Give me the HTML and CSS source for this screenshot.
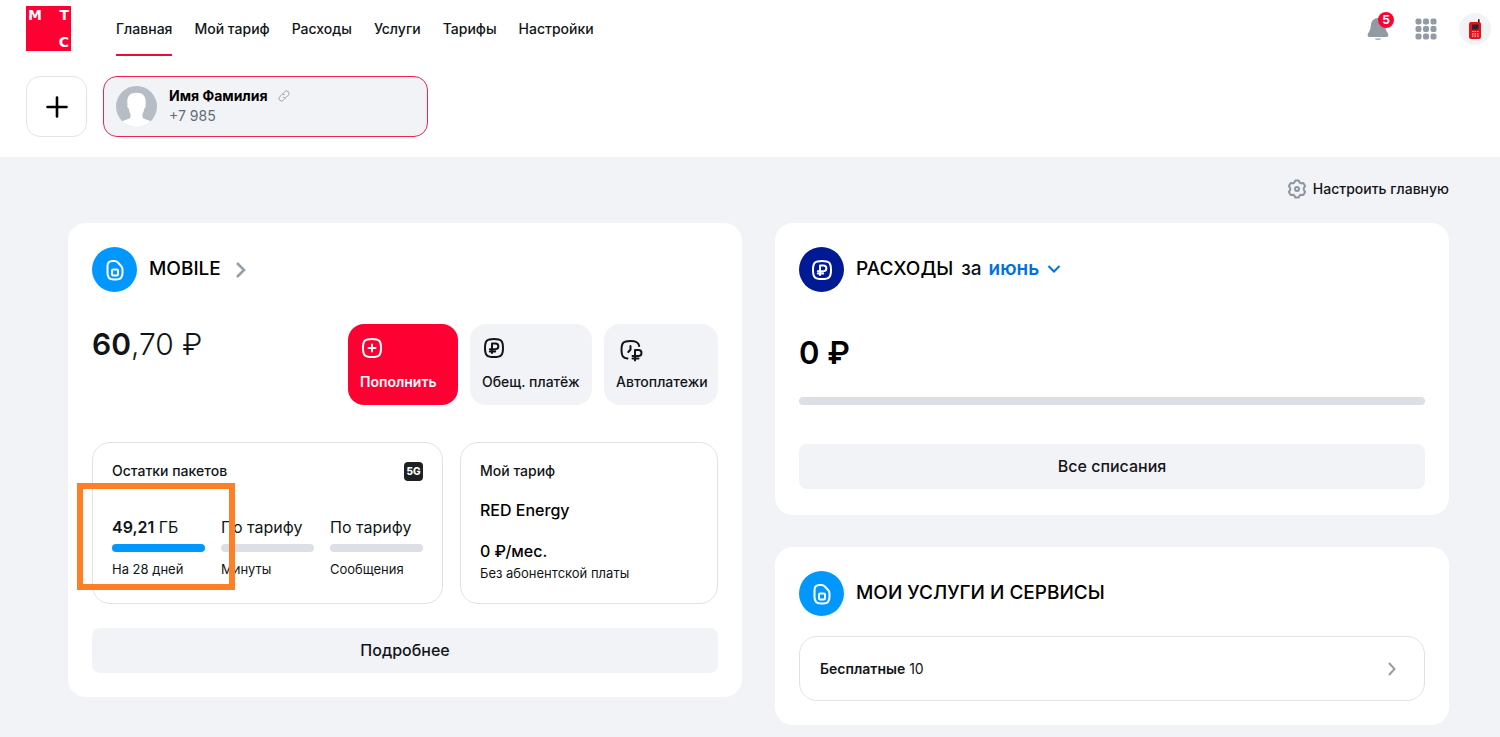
FILE: index.html
```html
<!DOCTYPE html>
<html lang="ru">
<head>
<meta charset="utf-8">
<title>МТС — Главная</title>
<link rel="stylesheet" href="styles.css">
</head>
<body>
<svg class="sprite" aria-hidden="true">
  <symbol id="sim" viewBox="0 0 24 24"><path d="M4.500 8.200C4.500 4.500 6.200 3 9.500 3h2c1.300 0 2.200.4 3.100 1.300l3.500 3.700C19.200 9.100 19.500 10 19.500 11.500v3.500c0 4.500-1.700 6.500-6.200 6.500h-2.600C6.200 21.500 4.500 19.500 4.500 15Z"/><rect x="9" y="11.500" width="6" height="6" rx="1.200"/></symbol>
  <symbol id="ruble" viewBox="0 0 24 24"><path d="M12 3c7.200 0 9 1.800 9 9s-1.800 9-9 9-9-1.800-9-9 1.800-9 9-9Z"/><path d="M10 17V7.500h3.500a2.800 2.800 0 0 1 0 5.700H7.800M7.800 15.500h5.400"/></symbol>
</svg>

<header class="header">
  <div class="topbar">
    <a class="logo" href="#" aria-label="МТС"><span>М</span><span>Т</span><span class="logo-last">С</span></a>
    <nav class="nav">
      <a class="nav-link active" href="#">Главная</a>
      <a class="nav-link" href="#">Мой тариф</a>
      <a class="nav-link" href="#">Расходы</a>
      <a class="nav-link" href="#">Услуги</a>
      <a class="nav-link" href="#">Тарифы</a>
      <a class="nav-link" href="#">Настройки</a>
    </nav>
    <div class="tools">
      <button class="tool bell" aria-label="Уведомления">
        <svg width="24" height="26" viewBox="0 0 24 26" fill="#929ba5"><path d="M12 2c-4 0-6.800 3-7.100 7-.3 4-1 5.500-2.300 7.500C1 19 1.500 21 4 21h16c2.500 0 3-2 1.400-4.500C20 14.500 19.400 13 19.100 9 18.800 5 16 2 12 2ZM8.500 22.500c1 1.800 6 1.800 7 0Z"/></svg>
        <span class="badge">5</span>
      </button>
      <button class="tool" aria-label="Приложения">
        <svg width="22" height="22" viewBox="0 0 22 22" fill="#929ba5"><rect x=".5" y=".5" width="6" height="6" rx="2"/><rect x="8" y=".5" width="6" height="6" rx="2"/><rect x="15.500" y=".5" width="6" height="6" rx="2"/><rect x=".5" y="8" width="6" height="6" rx="2"/><rect x="8" y="8" width="6" height="6" rx="2"/><rect x="15.500" y="8" width="6" height="6" rx="2"/><rect x=".5" y="15.500" width="6" height="6" rx="2"/><rect x="8" y="15.500" width="6" height="6" rx="2"/><rect x="15.500" y="15.500" width="6" height="6" rx="2"/></svg>
      </button>
      <button class="tool profile" aria-label="Профиль">
        <svg width="32" height="32" viewBox="0 0 32 32"><rect x="19" y="6" width="1.600" height="6" rx=".8" fill="#222"/><rect x="10" y="9" width="12" height="17" rx="2" fill="#e3131b"/><rect x="13" y="11.500" width="6.500" height="5" fill="#20262c"/><path d="M13 18.500h1.600m.9 0h1.600m.9 0h1.600M13 20.800h1.600m.9 0h1.600m.9 0h1.600M13 23.100h1.600m.9 0h1.600m.9 0h1.600" stroke="#ffb6b6" stroke-width="1.200"/></svg>
      </button>
    </div>
  </div>
  <div class="accounts">
    <button class="add" aria-label="Добавить номер"><svg width="22" height="22" viewBox="0 0 22 22"><path d="M11 1.500v19M1.500 11h19" stroke="#000" stroke-width="2.600" stroke-linecap="round"/></svg></button>
    <button class="account">
      <svg class="avatar" viewBox="0 0 40 40"><defs><clipPath id="disc"><circle cx="20" cy="20" r="20"/></clipPath></defs><g clip-path="url(#disc)"><path fill="#b7bdc4" d="M0 0h40v40H0z"/><path fill="#fff" d="M20 6.500c-5.800 0-9 3.300-9 8.500 0 1.500.2 2.600.3 3.300-.8.900 0 3.400 1.200 4 .3 2.300.9 3.900 1.700 5.200.3 3.500-.6 4.200-3 5C8.500 33.500 6.500 34 5 35.500V42h30v-6.500c-1.500-1.500-3.500-2-6.200-3-2.400-.8-3.300-1.500-3-5 .8-1.300 1.400-2.900 1.700-5.200 1.200-.6 2-3.100 1.200-4 .1-.7.300-1.800.3-3.300 0-5.200-3.200-8.500-9-8.500Z"/></g></svg>
      <span class="account-text">
        <span class="account-name">Имя Фамилия <svg width="12" height="12" viewBox="0 0 12 12" fill="none" stroke="#9aa3ad" stroke-linecap="round"><path d="M5 3.500 6.800 1.700a2.400 2.400 0 0 1 3.500 3.500L8.500 7c-1 1-2.300 1-3.200.2M7 8.500 5.200 10.300a2.400 2.400 0 0 1-3.500-3.500L3.500 5c1-1 2.300-1 3.200-.2"/></svg></span>
        <span class="account-phone">+7 985</span>
      </span>
    </button>
  </div>
</header>

<main class="main">
  <div class="customize">
    <button class="customize-button"><svg width="20" height="20" viewBox="0 0 20 20" fill="none" stroke="#8d969f" stroke-width="2" stroke-linejoin="round"><path d="M8.300 1.500h3.400l1.100 2.200 1.100.6 2.400-.2 1.800 3L16.800 9v2l1.300 1.900-1.800 3-2.400-.2-1.100.6-1.100 2.200H8.300l-1.100-2.200-1.100-.6-2.400.2-1.800-3L3.200 11V9L1.900 7.100l1.800-3 2.400.2 1.100-.6Z"/><circle cx="10" cy="10" r="2"/></svg>Настроить главную</button>
  </div>
  <div class="columns">
    <section class="card">
      <a class="card-head" href="#">
        <span class="disc"><svg class="line"><use href="#sim"/></svg></span>
        <span class="card-title">MOBILE</span>
        <svg class="title-arrow" width="12" height="18" viewBox="0 0 12 18" fill="none" stroke="#969fa8" stroke-width="2.600"><path d="m2 2 7 7-7 7"/></svg>
      </a>
      <div class="balance-row">
        <div class="balance"><b>60</b>,70 ₽</div>
        <div class="actions">
          <button class="action primary"><svg class="line" viewBox="0 0 24 24"><path d="M12 3c7.200 0 9 1.800 9 9s-1.800 9-9 9-9-1.800-9-9 1.800-9 9-9ZM12 8.500v7M8.500 12h7"/></svg>Пополнить</button>
          <button class="action"><svg class="line"><use href="#ruble"/></svg>Обещ. платёж</button>
          <button class="action"><svg class="line wide" viewBox="0 0 28 26"><path d="M11.500 22.500C7 22 5.500 20 5.500 14c0-7.200 1.800-9 9-9 5.500 0 8 1 8.700 5M14.500 10v3.500l-2.200 2.500M19 24.500V14h3.500a2.900 2.900 0 0 1 0 6H16.500M16.500 22.500h6"/></svg>Автоплатежи</button>
        </div>
      </div>
      <div class="panels">
        <section class="panel">
          <div class="panel-head"><h2 class="panel-title">Остатки пакетов</h2><span class="tag">5G</span></div>
          <div class="stats">
            <div class="stat"><span class="stat-value"><b>49,21</b> ГБ</span><span class="bar full"></span><span class="note">На 28 дней</span></div>
            <div class="stat"><span class="stat-value">По тарифу</span><span class="bar"></span><span class="note">Минуты</span></div>
            <div class="stat"><span class="stat-value">По тарифу</span><span class="bar"></span><span class="note">Сообщения</span></div>
          </div>
          <span class="highlight"></span>
        </section>
        <section class="panel">
          <div class="panel-head"><h2 class="panel-title">Мой тариф</h2></div>
          <p class="plan">RED Energy</p>
          <p class="price">0 ₽/мес.</p>
          <p class="note">Без абонентской платы</p>
        </section>
      </div>
      <button class="wide-button">Подробнее</button>
    </section>

    <div class="stack">
      <section class="card expenses">
        <div class="card-head">
          <span class="disc navy"><svg class="line"><use href="#ruble"/></svg></span>
          <h2 class="card-title">РАСХОДЫ</h2>
          <label class="period" for="month">за</label>
          <span class="month-wrap"><select class="month" id="month"><option>июнь</option></select><svg width="14" height="10" viewBox="0 0 14 10" fill="none" stroke="#0070e5" stroke-width="2"><path d="m1.500 2 5.500 5.500L12.500 2"/></svg></span>
        </div>
        <p class="total">0 ₽</p>
        <span class="bar total-bar"></span>
        <button class="wide-button">Все списания</button>
      </section>
      <section class="card">
        <div class="card-head">
          <span class="disc"><svg class="line"><use href="#sim"/></svg></span>
          <h2 class="card-title">МОИ УСЛУГИ И СЕРВИСЫ</h2>
        </div>
        <a class="service" href="#"><span><b>Бесплатные</b> 10</span><svg width="10" height="14" viewBox="0 0 10 14" fill="none" stroke="#969fa8" stroke-width="2"><path d="m2 1 5.500 6L2 13"/></svg></a>
      </section>
    </div>
  </div>
</main>
</body>
</html>
```
FILE: styles.css
```css
* { box-sizing: border-box; }
body, h2, p { margin: 0; }
body {
  min-height: 100vh;
  background: #f2f3f7;
  color: #121518;
  font-family: Inter, Roboto, sans-serif;
  font-size: 14px;
  line-height: 20px;
}
button, select { padding: 0; border: 0; background: none; color: inherit; font: inherit; cursor: pointer; }
a { color: inherit; text-decoration: none; }
svg { display: block; flex: none; }
.sprite { position: absolute; width: 0; height: 0; }
.line { width: 24px; height: 24px; fill: none; stroke: currentColor; stroke-width: 2; stroke-linecap: round; stroke-linejoin: round; }
.line.wide { width: 28px; height: 26px; }

.header { height: 157px; padding: 0 9px 0 26px; background: #fff; }
.topbar { display: flex; height: 58px; }
.logo { display: grid; grid-template-columns: 1fr 1fr; align-content: space-between; width: 45px; height: 45px; margin-top: 6px; padding: 3px 2px; background: #ff0032; color: #fff; font-family: "DejaVu Sans", sans-serif; font-weight: 700; font-size: 14px; line-height: 12px; }
.logo span:nth-child(2), .logo-last { text-align: right; }
.logo-last { grid-column: 2; }
.nav { display: flex; gap: 22px; margin-left: 45px; }
.nav-link { height: 56px; padding-top: 19px; border-bottom: 2px solid transparent; font-weight: 500; }
.nav-link.active { border-color: #e30f37; }
.tools { display: flex; align-items: center; gap: 22px; margin-left: auto; }
.bell { position: relative; margin-right: 3px; }
.badge { position: absolute; top: -4px; right: -4px; width: 16px; height: 16px; border-radius: 50%; background: #ff0032; color: #fff; font-weight: 700; font-size: 12px; line-height: 16px; }
.profile { border-radius: 50%; background: #f2f3f7; }
.accounts { display: flex; gap: 16px; padding-top: 18px; }
.add { display: grid; place-items: center; width: 61px; height: 61px; border: 1px solid #e2e4ea; border-radius: 14px; }
.account { display: flex; align-items: center; gap: 12px; width: 325px; height: 61px; padding: 0 12px; border: 1px solid #f5224e; border-radius: 14px; background: #f2f3f7; text-align: left; }
.avatar { width: 41px; height: 41px; }
.account-text { display: grid; padding-bottom: 2px; }
.account-name { display: flex; align-items: center; gap: 10px; color: #000; font-weight: 700; }
.account-phone { color: #626c77; }

.main { padding: 22px 51px 12px 68px; }
.customize { display: flex; justify-content: flex-end; height: 44px; }
.customize-button { display: flex; gap: 6px; height: 20px; font-weight: 500; }
.columns { display: grid; grid-template-columns: 1fr 1fr; align-items: start; gap: 33px; }
.stack { display: grid; gap: 32px; }
.card { padding: 24px; border-radius: 18px; background: #fff; }
.card-head { display: flex; align-items: center; }
.disc { display: grid; place-items: center; width: 45px; height: 45px; margin-right: 12px; border-radius: 50%; background: #0097ff; color: #fff; }
.navy { background: #001a96; }
.card-title { padding-bottom: 2px; color: #000; font-weight: 500; font-size: 19px; line-height: 28px; }
.title-arrow { margin-left: 14px; }
.period { margin-left: 8px; padding-bottom: 2px; font-weight: 500; font-size: 19px; }
.month-wrap { display: flex; align-items: center; gap: 8px; margin-left: 7px; padding-bottom: 2px; }
.month { appearance: none; field-sizing: content; color: #0070e5; font-weight: 600; font-size: 19px; line-height: 24px; }

.balance-row { display: flex; justify-content: space-between; margin-top: 32px; }
.balance { font-weight: 300; font-size: 30px; line-height: 40px; }
.balance b { font-weight: 600; }
.actions { display: grid; grid-template-columns: 110px 122px 114px; gap: 12px; }
.action { display: flex; flex-direction: column; align-items: flex-start; justify-content: space-between; height: 81px; padding: 12px 12px 13px; border-radius: 16px; background: #f2f3f7; font-weight: 500; white-space: nowrap; }
.primary { background: #ff0032; color: #fff; font-weight: 600; }

.panels { display: grid; grid-template-columns: 351fr 258fr; gap: 17px; margin-top: 37px; }
.panel { position: relative; height: 162px; padding: 18px 19px; border: 1px solid #e0e2e8; border-radius: 18px; }
.panel-head { display: flex; align-items: center; justify-content: space-between; height: 20px; }
.panel-title { font-weight: 500; font-size: 14px; line-height: 20px; }
.tag { width: 19px; height: 19px; border-radius: 4px; background: #1d2023; color: #fff; font-weight: 800; font-size: 10px; line-height: 19px; text-align: center; }
.stats { display: grid; grid-template-columns: repeat(3, 1fr); gap: 16px; margin-top: 34px; }
.stat { display: grid; white-space: nowrap; }
.stat-value { font-size: 16px; line-height: 24px; }
.stat-value b { font-weight: 600; }
.bar { display: block; height: 8px; border-radius: 4px; background: #dcdfe6; }
.stat .bar { margin: 5px 0 7px; }
.bar.full { background: #0097ff; }
.note { font-size: 13px; line-height: 20px; }
.highlight { position: absolute; top: 40px; left: -16px; width: 158px; height: 107px; border: 6px solid #ff7f27; }
.plan, .price { color: #000; font-weight: 500; font-size: 16px; line-height: 24px; }
.plan { margin-top: 17px; }
.price { margin-top: 17px; }
.wide-button { display: block; width: 100%; height: 45px; margin-top: 24px; padding-bottom: 2px; border-radius: 8px; background: #f2f3f7; font-weight: 500; font-size: 16px; }

.expenses { padding-bottom: 26px; }
.total { margin-top: 41px; color: #000; font-weight: 600; font-size: 31px; line-height: 40px; }
.total-bar { margin: 24px 0 39px; }
.service { display: flex; align-items: center; justify-content: space-between; height: 65px; margin-top: 20px; padding: 0 27px 0 20px; border: 1px solid #e0e2e8; border-radius: 18px; }
.service b { font-weight: 600; }
```
